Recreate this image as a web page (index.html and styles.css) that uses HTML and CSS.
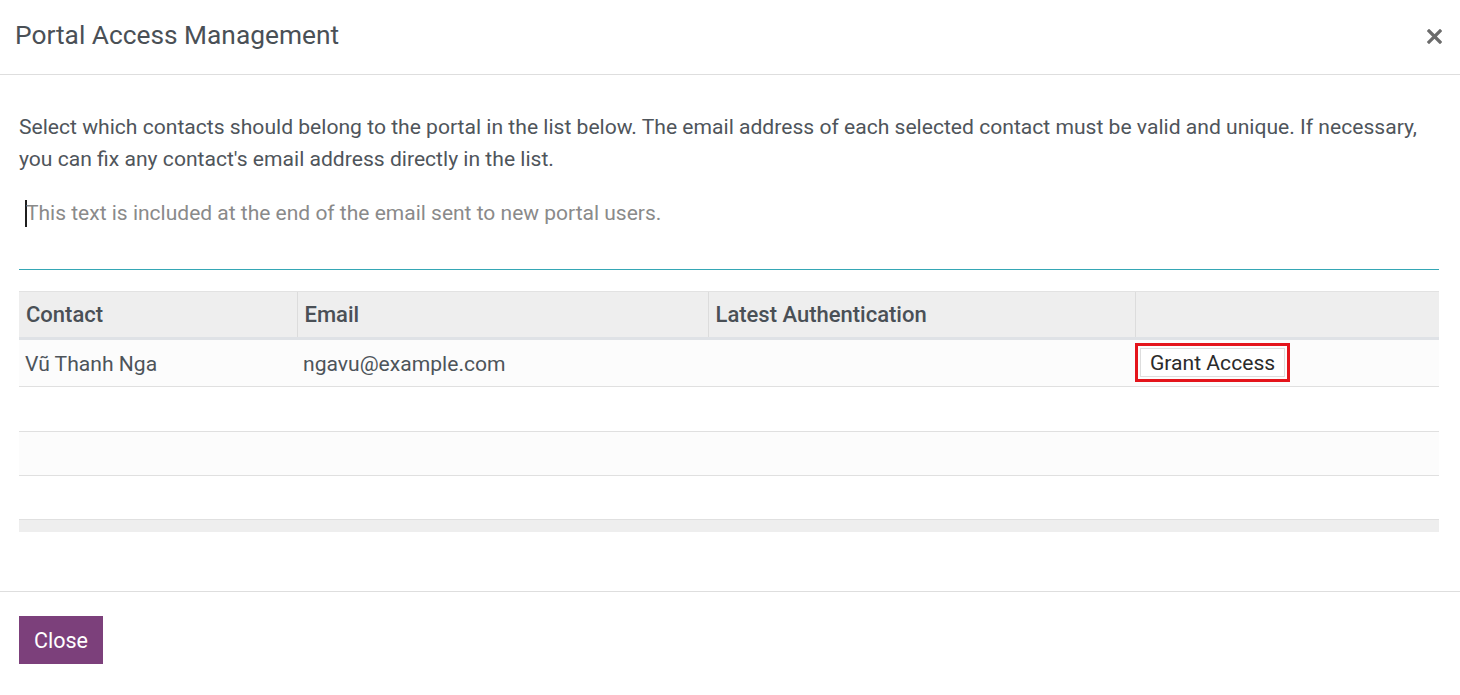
FILE: index.html
```html
<!DOCTYPE html>
<html lang="en">
<head>
<meta charset="utf-8">
<title>Portal Access Management</title>
<link rel="stylesheet" href="styles.css">
</head>
<body>
<div class="modal">
  <header class="modal-header">
    <h4 class="modal-title">Portal Access Management</h4>
    <button class="close" aria-label="Close">
      <svg width="15" height="15" viewBox="0 0 15 15"><path d="M2 2 L13 13 M13 2 L2 13" stroke="#6b6b6b" stroke-width="3.2" stroke-linecap="square"/></svg>
    </button>
  </header>
  <main class="modal-body">
    <p class="intro">Select which contacts should belong to the portal in the list below. The email address of each selected contact must be valid and unique. If necessary, you can fix any contact's email address directly in the list.</p>
    <div class="textarea"><span class="caret"></span><span class="placeholder">This text is included at the end of the email sent to new portal users.</span></div>
    <div class="focus-line"></div>
    <table class="list">
      <colgroup>
        <col class="c1"><col class="c2"><col class="c3"><col class="c4">
      </colgroup>
      <thead>
        <tr><th>Contact</th><th>Email</th><th>Latest Authentication</th><th></th></tr>
      </thead>
      <tbody>
        <tr class="r1"><td>Vũ Thanh Nga</td><td>ngavu@example.com</td><td></td><td class="act"><span class="mark"><button class="grant">Grant Access</button></span></td></tr>
        <tr class="r2"><td></td><td></td><td></td><td></td></tr>
        <tr class="r3"><td></td><td></td><td></td><td></td></tr>
        <tr class="r4"><td></td><td></td><td></td><td></td></tr>
      </tbody>
      <tfoot>
        <tr><td></td><td></td><td></td><td></td></tr>
      </tfoot>
    </table>
  </main>
  <footer class="modal-footer">
    <button class="btn-primary">Close</button>
  </footer>
</div>
</body>
</html>
```

FILE: styles.css
```css
html, body {
  margin: 0;
  padding: 0;
  background: #ffffff;
}
body {
  font-family: Roboto, "Liberation Sans", Arial, sans-serif;
  color: #4c4c4c;
}
.modal {
  width: 1460px;
  height: 695px;
  display: flex;
  flex-direction: column;
}
.modal-header {
  height: 75px;
  box-sizing: border-box;
  border-bottom: 1px solid #dedede;
  display: flex;
  align-items: center;
  justify-content: space-between;
  padding: 0 18px 4px 15px;
}
.modal-title {
  margin: 0;
  font-size: 26.3px;
  font-weight: 400;
  color: #4a5056;
}
.close {
  border: 0;
  background: none;
  padding: 0;
  margin: 0;
  display: flex;
  margin-top: 2px;
}
.modal-body {
  padding: 36px 21px 0 19px;
}
.intro {
  margin: 0;
  font-size: 21.1px;
  line-height: 32px;
  color: #4f555b;
}
.textarea {
  margin-top: 22px;
  height: 72px;
  box-sizing: border-box;
  padding: 0 0 0 6px;
  font-size: 21px;
  line-height: 32px;
  display: flex;
  align-items: flex-start;
}
.focus-line {
  height: 1px;
  background: #35a7b5;
}
.caret {
  display: inline-block;
  width: 2px;
  height: 27px;
  margin-top: 3px;
  background: #1f1f1f;
  margin-right: -1px;
}
.placeholder {
  color: #8a8a8a;
}
.list {
  margin-top: 21px;
  width: 1420px;
  border-collapse: collapse;
  table-layout: fixed;
  font-size: 21.1px;
  color: #4d545a;
}
.c1 { width: 278px; }
.c2 { width: 411px; }
.c3 { width: 427px; }
.c4 { width: 304px; }
.list thead th {
  background: #eeeeee;
  height: 45px;
  padding: 0 7px;
  text-align: left;
  font-size: 22px;
  font-weight: 500;
  border-top: 1px solid #e2e2e2;
  border-bottom: 3px solid #dfe2e6;
  border-left: 1px solid #dcdcdc;
  color: #4a5056;
}
.list thead th:first-child { border-left: 0; }
.list tbody td {
  padding: 0 6px;
  border-bottom: 1px solid #e0e0e0;
}
.list tbody tr:nth-child(odd) { background: #fcfcfc; }
.list tbody tr:nth-child(even) { background: #ffffff; }
.r1 td { height: 44px; padding-bottom: 2px; }
.r2 td { height: 44px; }
.r3 td { height: 43px; }
.r4 td { height: 43px; }
.list tbody td.act { padding: 0 0 2px 0; }
.mark {
  display: inline-flex;
  border: 3px solid #e4141b;
  padding: 2px;
  vertical-align: middle;
  margin-top: 1px;
}
.grant {
  font-family: inherit;
  font-size: 21.1px;
  color: #2b2b2b;
  background: #ffffff;
  border: 1px solid #dddddd;
  padding: 0 9px;
  height: 29px;
  line-height: 27px;
  margin: 0;
}
.list tfoot td {
  height: 12px;
  padding: 0;
  background: #eeeeee;
}
.modal-footer {
  margin-top: 59px;
  border-top: 1px solid #dedede;
  padding: 24px 19px 0;
}
.btn-primary {
  width: 84px;
  height: 48px;
  border: 0;
  margin: 0;
  padding: 0;
  background: #7c407b;
  color: #ffffff;
  font-family: inherit;
  font-size: 21.5px;
}
```
